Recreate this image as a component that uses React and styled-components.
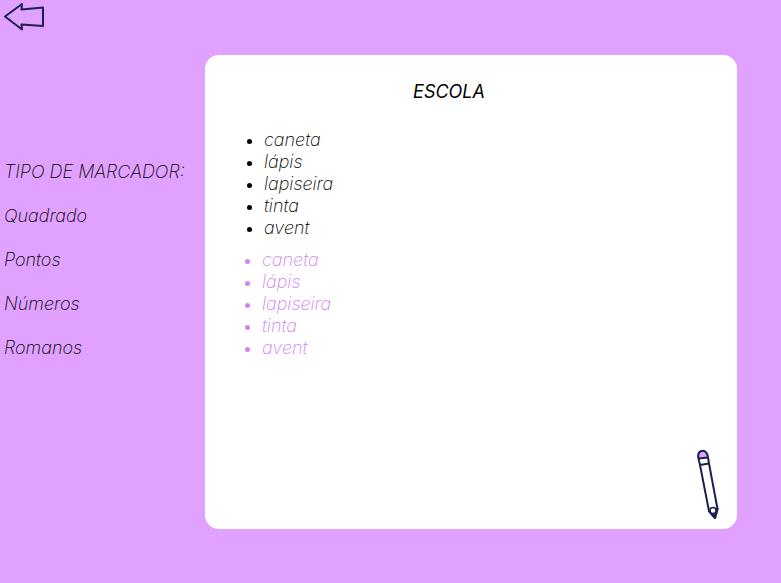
import React from "react";
import styled, { createGlobalStyle } from "styled-components";

const GlobalStyle = createGlobalStyle`
  *, *::before, *::after { box-sizing: border-box; }
  body {
    margin: 0;
    background: #e0a1ff;
    color: #000;
    font: italic 200 18px/22px Inter, sans-serif;
  }
`;

const Page = styled.div`
  display: grid;
  grid-template-rows: 55px 1fr;
  min-height: 100vh;
`;

const TopBar = styled.header`
  padding: 3px 4px;
`;

const IconButton = styled.button`
  display: block;
  padding: 0;
  border: 0;
  background: none;
  cursor: pointer;
  svg { display: block; }
`;

const Content = styled.div`
  display: grid;
  grid-template-columns: 205px 1fr;
  padding: 0 44px 54px 0;
`;

const Sidebar = styled.nav`
  display: flex;
  flex-direction: column;
  align-items: flex-start;
  gap: 22px;
  padding: 106px 4px 0;
`;

const SidebarTitle = styled.h2`
  margin: 0;
  font: inherit;
  white-space: nowrap;
`;

const MarkerButton = styled.button`
  padding: 0;
  border: 0;
  background: none;
  color: inherit;
  font: inherit;
  cursor: pointer;
`;

const Card = styled.main`
  display: flex;
  flex-direction: column;
  padding: 26px 18px 9px 38px;
  border-radius: 14px;
  background: #fff;
`;

const Title = styled.h1`
  margin: 0 0 26px;
  padding-right: 64px;
  font: inherit;
  font-weight: 400;
  text-align: center;
`;

const ItemList = styled.ul`
  margin: ${(p) => (p.$muted ? "10px 0 0" : "0 0 0 2px")};
  padding: 0;
  list-style: none;
  color: ${(p) => (p.$muted ? "#d183f6" : "#000")};
`;

const Item = styled.li`
  display: flex;
  align-items: center;
  gap: 12px;
  &::before {
    content: "";
    width: 5px;
    height: 5px;
    margin: 2px 0 0 2px;
    border-radius: 50%;
    background: currentColor;
  }
`;

const EditButton = styled(IconButton)`
  margin: auto 0 0 auto;
`;

const markers = ["Quadrado", "Pontos", "Números", "Romanos"];
const items = ["caneta", "lápis", "lapiseira", "tinta", "avent"];

function ArrowIcon() {
  return (
    <svg width="42" height="28" viewBox="0 0 42 28" fill="none" stroke="#1a2150" strokeWidth="2" strokeLinejoin="round" aria-hidden="true">
      <path d="M1 13.5 18 1 17.5 6.5 39 4.5V23L17.5 21.5 18 26.5Z" />
    </svg>
  );
}

function PencilIcon() {
  return (
    <svg width="22" height="71" viewBox="0 0 22 71" fill="none" stroke="#1a2150" strokeWidth="2" strokeLinejoin="round" aria-hidden="true">
      <path d="M1.5 9.500C-.5 1 8.500-1 10.500 6L11 8.500Z" fill="#e0a1ff" />
      <path d="M1.5 9.5 3 16 12 14.5 11 8.5M3 16 12 62 18 69 20.500 60 12 14.500" />
      <path d="M12 62 18 69 20.500 60Z" fill="#1a2150" />
      <circle cx="16" cy="61.500" r="3" fill="#fff" strokeWidth="1.500" />
    </svg>
  );
}

function MarkerList({ muted }) {
  return (
    <ItemList $muted={muted}>
      {items.map((item) => (
        <Item key={item}>{item}</Item>
      ))}
    </ItemList>
  );
}

export default function App() {
  return (
    <Page>
      <GlobalStyle />
      <TopBar>
        <IconButton type="button" aria-label="Voltar"><ArrowIcon /></IconButton>
      </TopBar>
      <Content>
        <Sidebar>
          <SidebarTitle>TIPO DE MARCADOR:</SidebarTitle>
          {markers.map((marker) => (
            <MarkerButton key={marker} type="button">{marker}</MarkerButton>
          ))}
        </Sidebar>
        <Card>
          <Title>ESCOLA</Title>
          <MarkerList />
          <MarkerList muted />
          <EditButton type="button" aria-label="Editar"><PencilIcon /></EditButton>
        </Card>
      </Content>
    </Page>
  );
}
